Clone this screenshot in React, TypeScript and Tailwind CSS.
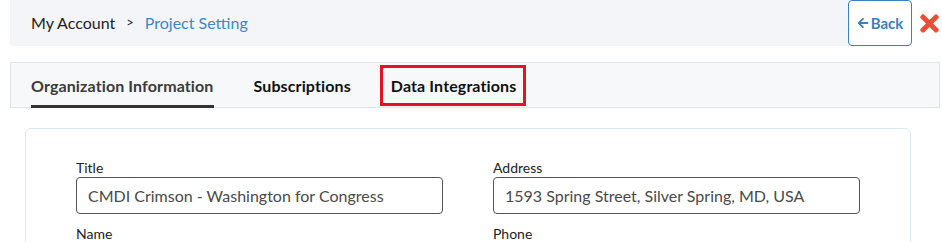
import { FaArrowLeft, FaTimes } from 'react-icons/fa'

function Field({ label, value }: { label: string; value: string }) {
  return (
    <div className="flex flex-col">
      <label className="text-[14px] leading-[17px] text-[#222] mb-[1px]">{label}</label>
      <input
        readOnly
        value={value}
        className="h-[37px] rounded-[4px] border border-[#555] px-[11px] text-[16px] text-[#4a4a4a] outline-none"
      />
    </div>
  )
}

export default function App() {
  const tabs = ['Organization Information', 'Subscriptions', 'Data Integrations']
  return (
    <div className="w-[942px] h-[242px] overflow-hidden bg-white font-['Lato','Liberation_Sans',sans-serif]">
      <div className="flex items-start pl-[10px]">
        <div className="flex-1 h-[46px] bg-[#f4f5f9] rounded-bl-[4px] flex items-center pl-[21px] text-[16px]">
          <span className="text-[#222]">My Account</span>
          <span className="mx-[11px] text-[13px] text-[#222]">&gt;</span>
          <span className="text-[#3c87c9]">Project Setting</span>
        </div>
        <button className="w-[64px] h-[46px] rounded-[4px] border border-[#3a7fc0] flex items-center justify-center gap-[2px] text-[#3a7fc0] text-[15px] font-bold">
          <FaArrowLeft className="w-[12px] h-[12px]" />
          Back
        </button>
        <div className="w-[30px] h-[46px] flex items-center justify-end pr-[1px]">
          <FaTimes className="w-[23px] h-[27px] text-[#ec4d37]" />
        </div>
      </div>

      <div className="mt-[16px] ml-[10px] mr-[2px] h-[46px] bg-[#f6f8fa] border border-[#dde5ea] flex items-stretch gap-[40px] pl-[20px]">
        {tabs.map((t, i) => (
          <div key={t} className="relative flex items-center pt-[1px] text-[16px] tracking-[0.12px] font-bold">
            <span className={i === 0 ? 'text-[#3a3a3a]' : 'text-[#111]'}>{t}</span>
            {i === 0 && <div className="absolute left-0 right-0 bottom-[-1px] h-[3px] bg-[#333]" />}
            {i === 2 && <div className="absolute left-[-11px] right-[-10px] top-[2px] bottom-[1px] border-[3px] border-[#e3141c]" />}
          </div>
        ))}
      </div>

      <div className="mt-[20px] ml-[25px] w-[886px] rounded-[6px] border border-[#dde7ee] pt-[30px] px-[50px] pb-[20px]">
        <div className="grid grid-cols-2 gap-x-[50px] gap-y-[11px]">
          <Field label="Title" value="CMDI Crimson - Washington for Congress" />
          <Field label="Address" value="1593 Spring Street, Silver Spring, MD, USA" />
          <Field label="Name" value="" />
          <Field label="Phone" value="" />
        </div>
      </div>
    </div>
  )
}
